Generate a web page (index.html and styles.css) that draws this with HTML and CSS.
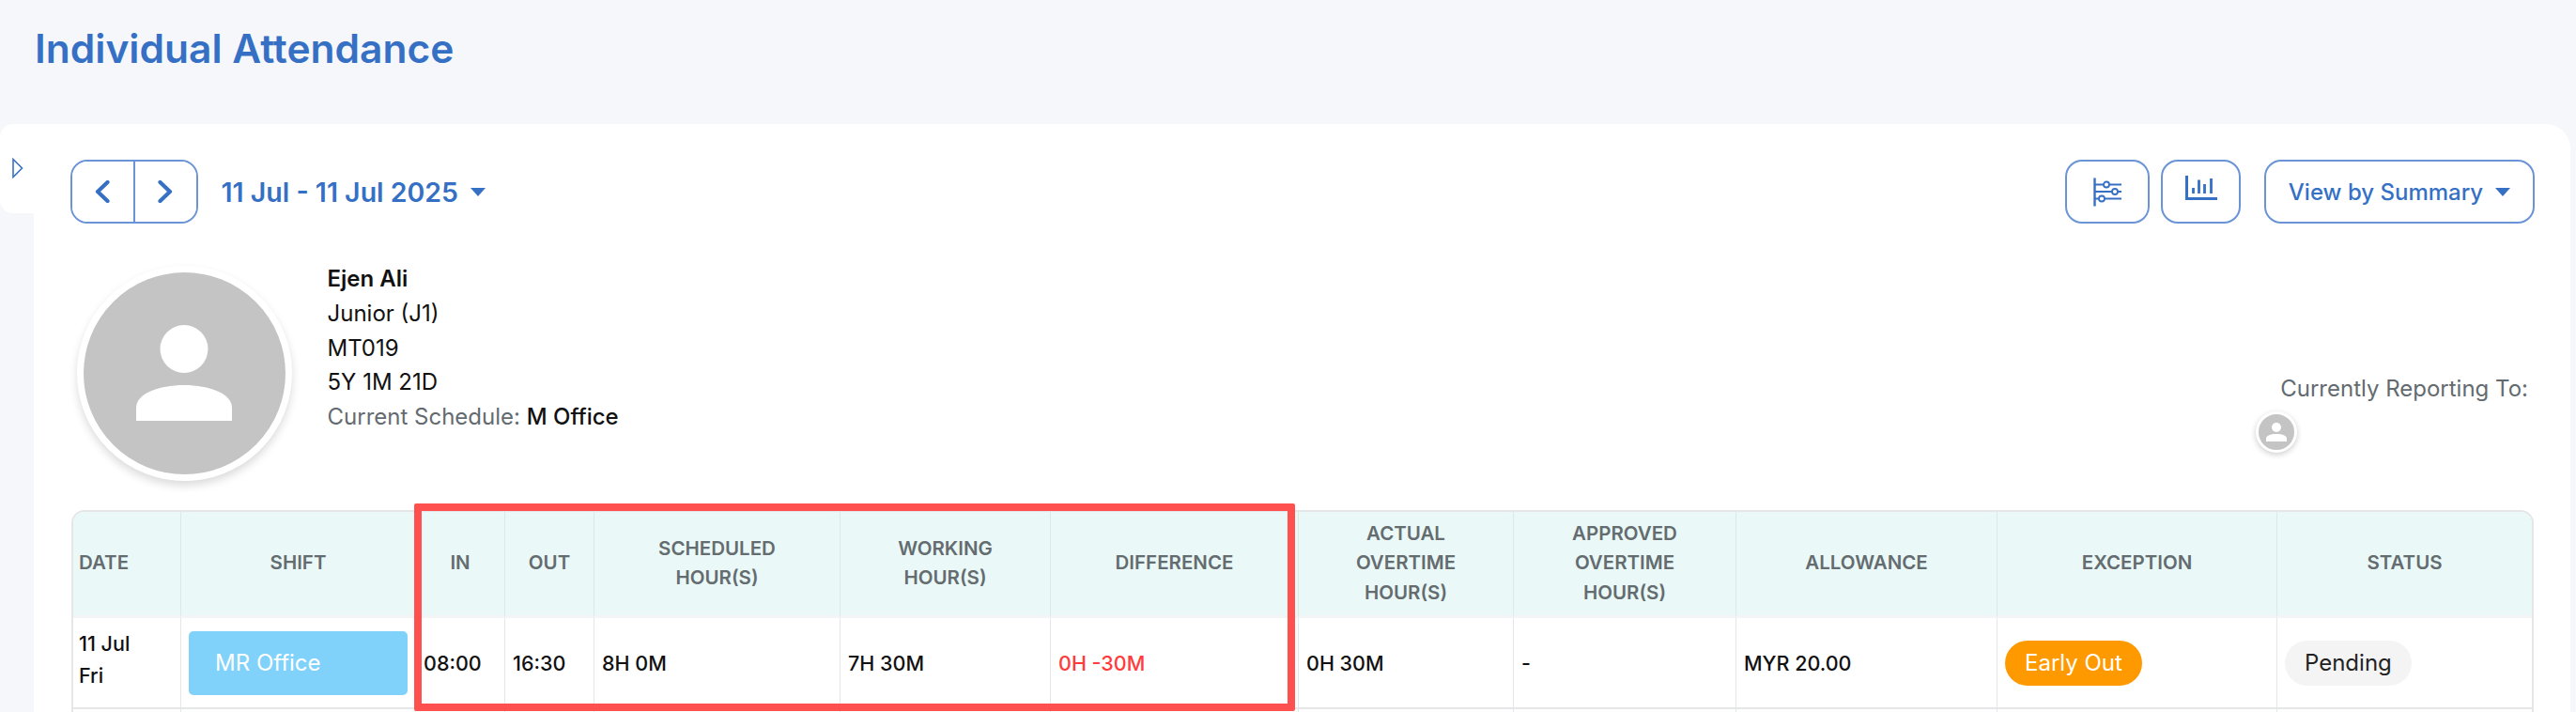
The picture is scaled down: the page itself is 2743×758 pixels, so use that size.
FILE: index.html
```html
<!DOCTYPE html>
<html lang="en">
<head>
<meta charset="utf-8">
<title>Individual Attendance</title>
<link rel="stylesheet" href="styles.css">
</head>
<body>
<header class="page-head"><h1 class="page-title">Individual Attendance</h1></header>
<main class="card">
  <div class="side-tab">
    <svg class="tab-arrow" width="12" height="22" viewBox="0 0 12 22"><path d="M1 1.5 L10.5 11 L1 20.5 Z" fill="none" stroke="#3a72c6" stroke-width="1.6"/></svg>
  </div>
  <div class="toolbar">
    <div class="pager">
      <button class="pager-btn"><svg width="16" height="24" viewBox="0 0 16 24"><path d="M13.5 2 L3 12 L13.5 22" fill="none" stroke="#3570c4" stroke-width="4.2" stroke-linecap="round" stroke-linejoin="round"/></svg></button>
      <button class="pager-btn pager-next"><svg width="16" height="24" viewBox="0 0 16 24"><path d="M2.5 2 L13 12 L2.5 22" fill="none" stroke="#3570c4" stroke-width="4.2" stroke-linecap="round" stroke-linejoin="round"/></svg></button>
    </div>
    <div class="range">11 Jul - 11 Jul 2025<span class="caret"></span></div>
    <div class="tools">
      <button class="icon-btn filter-btn"><svg width="30" height="31" viewBox="0 0 30 31" fill="none" stroke="#3570c4"><path d="M1.5 0.5 V30.5" stroke-width="2.4"/><path d="M1.5 7.5 H30 M1.5 15 H30 M1.5 22.5 H30" stroke-width="1.8"/><circle cx="14" cy="7.5" r="3" fill="#fff" stroke-width="1.8"/><circle cx="23" cy="15" r="3" fill="#fff" stroke-width="1.8"/><circle cx="9" cy="22.5" r="3" fill="#fff" stroke-width="1.8"/></svg></button>
      <button class="icon-btn chart-btn"><svg width="34" height="26" viewBox="0 0 34 26" fill="none" stroke="#3570c4"><path d="M1.5 0 V24.5 H34" stroke-width="3"/><path d="M8.5 13 V19 M14.5 4.5 V19 M20.5 9 V19 M27.5 3 V19" stroke-width="2.8"/></svg></button>
      <button class="view-btn">View by Summary<span class="caret"></span></button>
    </div>
  </div>
  <section class="profile">
    <div class="avatar">
      <svg width="102" height="102" viewBox="0 0 102 102" fill="#fff"><circle cx="51" cy="25.5" r="25.5"/><path d="M0 102 V88 C0 73 24 64 51 64 C78 64 102 73 102 88 V102 Z"/></svg>
    </div>
    <div class="details">
      <div class="name">Ejen Ali</div>
      <div>Junior (J1)</div>
      <div>MT019</div>
      <div>5Y 1M 21D</div>
      <div class="schedule">Current Schedule: <strong class="schedule-name">M Office</strong></div>
    </div>
    <div class="reporting">
      <div class="reporting-label">Currently Reporting To:</div>
      <div class="mini-avatar">
        <svg width="22" height="22" viewBox="0 0 22 22" fill="#fff"><circle cx="11" cy="6" r="5"/><path d="M0 21 V18 C0 14.5 5 13 11 13 C17 13 22 14.5 22 18 V21 Z"/></svg>
      </div>
    </div>
  </section>
  <div class="table-wrap">
    <div class="table-frame">
      <table class="att-table">
        <colgroup>
          <col class="c-date"><col class="c-shift"><col class="c-in"><col class="c-out"><col class="c-sched"><col class="c-work"><col class="c-diff"><col class="c-actual"><col class="c-appr"><col class="c-allow"><col class="c-exc"><col class="c-status">
        </colgroup>
        <thead>
          <tr>
            <th class="th-left">DATE</th><th>SHIFT</th><th>IN</th><th>OUT</th><th>SCHEDULED<br>HOUR(S)</th><th>WORKING<br>HOUR(S)</th><th>DIFFERENCE</th><th>ACTUAL<br>OVERTIME<br>HOUR(S)</th><th>APPROVED<br>OVERTIME<br>HOUR(S)</th><th>ALLOWANCE</th><th>EXCEPTION</th><th>STATUS</th>
          </tr>
        </thead>
        <tbody>
          <tr>
            <td class="td-date">11 Jul<br>Fri</td>
            <td class="td-shift"><div class="shift-block">MR Office</div></td>
            <td>08:00</td><td>16:30</td><td>8H 0M</td><td>7H 30M</td><td class="negative">0H -30M</td><td>0H 30M</td><td>-</td><td>MYR 20.00</td>
            <td><span class="pill pill-orange">Early Out</span></td>
            <td><span class="pill pill-grey">Pending</span></td>
          </tr>
          <tr class="row-next">
            <td></td><td></td><td></td><td></td><td></td><td></td><td></td><td></td><td></td><td></td><td></td><td></td>
          </tr>
        </tbody>
      </table>
    </div>
    <div class="highlight"></div>
  </div>
</main>
</body>
</html>
```
FILE: styles.css
```css
* { box-sizing: border-box; }
html, body { margin: 0; height: 758px; overflow: hidden; }
body {
  background: #f5f7fb;
  font-family: "Inter", "Liberation Sans", sans-serif;
  color: #111;
  font-size: 24px;
}
button { font-family: inherit; background: #fff; padding: 0; cursor: pointer; }

.page-head { height: 132px; padding: 26px 0 0 37px; }
.page-title { margin: 0; font-size: 42.5px; line-height: 52px; font-weight: 600; color: #3570c4; }

.card {
  position: relative;
  margin: 0 6px 0 36px;
  height: 626px;
  background: #fff;
  border-top-right-radius: 26px;
  padding: 38px 38px 0 38.5px;
}
.side-tab {
  position: absolute;
  left: -36px; top: 0;
  width: 36px; height: 95px;
  background: #fff;
  border-radius: 14px 0 0 14px;
  padding: 36px 0 0 13px;
}
.tab-arrow { display: block; }

.toolbar { display: flex; align-items: center; height: 68px; }
.pager {
  display: flex;
  width: 136px; height: 68px;
  border: 2px solid #6a94d6;
  border-radius: 18px;
  overflow: hidden;
}
.pager-btn { flex: 1; border: 0; display: flex; align-items: center; justify-content: center; }
.pager-next { border-left: 2px solid #6a94d6; }
.range { margin-left: 25px; font-size: 28.5px; font-weight: 600; color: #3570c4; display: flex; align-items: center; }
.caret {
  display: inline-block;
  width: 0; height: 0;
  margin-left: 13px;
  border-left: 8.5px solid transparent;
  border-right: 8.5px solid transparent;
  border-top: 9px solid #3570c4;
}
.tools { margin-left: auto; display: flex; align-items: center; }
.icon-btn {
  height: 68px;
  border: 2px solid #6a94d6;
  border-radius: 18px;
  display: flex; align-items: center; justify-content: center;
}
.filter-btn { width: 90px; }
.chart-btn { width: 85px; margin-left: 12px; padding-bottom: 8px; }
.view-btn {
  width: 288px; height: 68px;
  margin-left: 25px;
  border: 2px solid #6a94d6;
  border-radius: 18px;
  font-size: 24px;
  font-weight: 500;
  color: #3570c4;
  display: flex; align-items: center; justify-content: center;
}

.profile { display: flex; align-items: flex-start; margin-top: 41px; height: 264px; }
.avatar {
  width: 229px; height: 229px;
  margin: 4px 0 0 7px;
  flex: none;
  border-radius: 50%;
  background: #c4c4c4;
  border: 7px solid #fff;
  box-shadow: 0 5px 10px rgba(0,0,0,.14);
  display: flex; justify-content: center;
  padding-top: 56px;
}
.details { margin-left: 38px; line-height: 36.8px; color: #111; }
.name { font-weight: 600; }
.schedule { color: #636b70; }
.schedule-name { color: #111; font-weight: 500; }
.reporting { margin-left: auto; padding: 122px 7px 0 0; display: flex; flex-direction: column; align-items: flex-start; }
.reporting-label { color: #636b70; line-height: 26px; }
.mini-avatar {
  width: 44px; height: 44px;
  margin: 11px 0 0 -26px;
  border-radius: 50%;
  background: #c4c4c4;
  border: 3px solid #fff;
  box-shadow: 0 2px 6px rgba(0,0,0,.2);
  display: flex; justify-content: center;
  padding-top: 8px;
}

.table-wrap { position: relative; width: 2622px; margin-left: 1.5px; }
.table-frame {
  border: 2px solid #e4e6e8;
  border-bottom: 0;
  border-radius: 14px 14px 0 0;
  overflow: hidden;
}
.att-table { width: 2618px; table-layout: fixed; border-collapse: separate; border-spacing: 0; }
.c-date { width: 115px; } .c-shift { width: 250px; } .c-in { width: 95px; } .c-out { width: 95px; }
.c-sched { width: 262px; } .c-work { width: 224px; } .c-diff { width: 264px; } .c-actual { width: 229px; }
.c-appr { width: 237px; } .c-allow { width: 278px; } .c-exc { width: 298px; } .c-status { width: 271px; }

.att-table th {
  height: 113px;
  padding: 0 8px 2px;
  background: #eaf9f8;
  border-right: 1px solid #dfe8e8;
  border-bottom: 3px solid #f2f4f5;
  font-size: 20.5px;
  line-height: 31.5px;
  font-weight: 600;
  color: #646c70;
  text-align: center;
}
.att-table th.th-left { text-align: left; padding-left: 6px; }
.att-table td {
  height: 97px;
  padding: 0 8px;
  border-right: 1px solid #e4e6e8;
  border-bottom: 2px solid #e4e6e8;
  font-size: 21.5px;
  font-weight: 500;
  color: #111;
}
.att-table th:last-child, .att-table td:last-child { border-right: 0; }
.att-table td.td-date { line-height: 34px; padding: 0 0 8px 6px; }
.att-table td.td-shift { padding: 0 8px; }
.shift-block {
  height: 68px;
  background: #80d2fb;
  border-radius: 5px;
  color: #fff;
  font-size: 24px;
  font-weight: 400;
  padding-left: 28px;
  line-height: 68px;
}
.att-table td.negative { color: #ff3b3b; }
.pill { display: inline-block; height: 48px; line-height: 48px; border-radius: 24px; font-size: 24px; font-weight: 400; padding: 0 21px; }
.pill-orange { background: #ff9900; color: #fff; }
.pill-grey { background: #f4f4f4; color: #222; }

.highlight {
  position: absolute;
  left: 365px; top: -7px;
  width: 938px; height: 221px;
  border: 8px solid #ff5050;
  border-radius: 2px;
  pointer-events: none;
}
```
